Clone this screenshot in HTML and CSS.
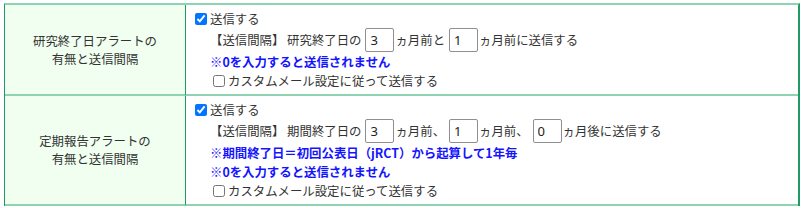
FILE: index.html
```html
<!DOCTYPE html>
<html lang="ja">
<head>
<meta charset="utf-8">
<link rel="stylesheet" href="styles.css">
</head>
<body>
<div class="form">
  <div class="label">研究終了日アラートの<br>有無と送信間隔</div>
  <div class="field">
    <div class="line main"><input type="checkbox" class="cb" checked><span>送信する</span></div>
    <div class="sub">
      <div class="line inputs">【送信間隔】 研究終了日の<input class="num" type="text" value="3">ヵ月前と<input class="num" type="text" value="1">ヵ月前に送信する</div>
      <div class="line note">※0を入力すると送信されません</div>
      <div class="line last"><input type="checkbox" class="cb small"><span>カスタムメール設定に従って送信する</span></div>
    </div>
  </div>
  <div class="label">定期報告アラートの<br>有無と送信間隔</div>
  <div class="field">
    <div class="line main"><input type="checkbox" class="cb" checked><span>送信する</span></div>
    <div class="sub">
      <div class="line inputs">【送信間隔】 期間終了日の<input class="num" type="text" value="3">ヵ月前、<input class="num" type="text" value="1">ヵ月前、<input class="num" type="text" value="0">ヵ月後に送信する</div>
      <div class="line note">※期間終了日＝初回公表日（jRCT）から起算して1年毎</div>
      <div class="line note">※0を入力すると送信されません</div>
      <div class="line last"><input type="checkbox" class="cb small"><span>カスタムメール設定に従って送信する</span></div>
    </div>
  </div>
</div>
</body>
</html>
```
FILE: styles.css
```css
html, body {
  margin: 0;
  padding: 0;
  background: #ffffff;
}
body {
  padding: 3px 0 0 4px;
  font-family: "Noto Sans CJK JP", "Noto Sans", sans-serif;
  font-size: 12.4px;
  color: #333333;
}
.form {
  width: 793px;
  display: grid;
  grid-template-columns: 181px 1fr;
  border-left: 1px solid #1f9a64;
  border-right: 2px solid #1f9a64;
  border-top: 2px solid #8fd4b2;
}
.label {
  background: #f0fff0;
  border-right: 1px solid #1f9a64;
  border-bottom: 2px solid #8fd4b2;
  display: flex;
  align-items: center;
  justify-content: center;
  text-align: center;
  line-height: 18px;
}
.field {
  border-bottom: 2px solid #8fd4b2;
  padding: 4px 5px;
  display: flex;
  flex-direction: column;
}
.line {
  display: flex;
  align-items: center;
  white-space: nowrap;
  height: 19px;
}
.line.inputs {
  height: 24px;
}
.sub {
  padding-left: 19px;
  display: flex;
  flex-direction: column;
}
.cb {
  width: 12px;
  height: 12px;
  margin: 0 3px 0 4px;
}
.cb.small {
  margin: 0 3px 0 3px;
}
.num {
  box-sizing: border-box;
  width: 29px;
  height: 24px;
  margin: 0 1px 0 4px;
  padding: 0 4px;
  border: 1px solid #8f8f8f;
  border-radius: 2px;
  font-family: "Noto Sans", "Noto Sans CJK JP", sans-serif;
  font-size: 13px;
  color: #222222;
}
.note {
  color: #1414ff;
  font-weight: bold;
}
```
